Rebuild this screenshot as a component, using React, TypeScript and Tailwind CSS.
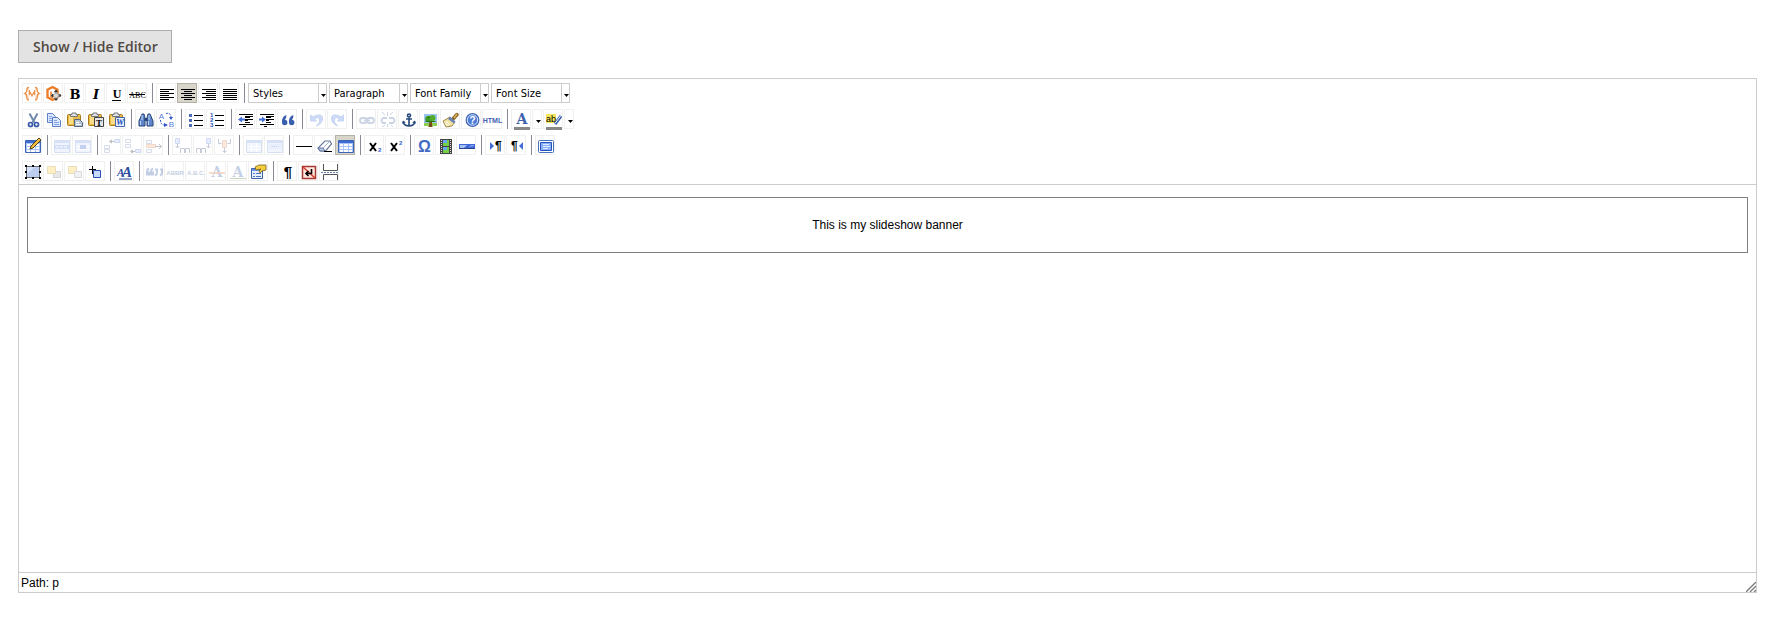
import { Fragment, type ReactNode } from 'react'

const serif = '"Liberation Serif", "Times New Roman", serif'
const slab = '"DejaVu Serif", "Liberation Serif", serif'
const sans = '"Liberation Sans", Arial, sans-serif'

const alignLines = (side: 'left' | 'center' | 'right' | 'full') => {
  const short = { left: 'h9', center: 'h8', right: 'h10', full: 'h14' }[side]
  const x = { left: 4, center: 7, right: 8, full: 4 }[side]
  return (
    <path
      d={`M4 6.5h14M${x} 8.5${short}M4 10.5h14M${x} 12.5${short}M4 14.5h14M${x} 16.5${short}`}
      stroke="#000"
      shapeRendering="crispEdges"
    />
  )
}

const clipboard = (
  <>
    <rect x="3.5" y="5.5" width="13" height="11" rx="1" fill="#e8bc48" stroke="#a87a1c" />
    <path d="M5 7h4v8H5z" fill="#f8dc88" />
    <path d="M6.500 7.500v-2h1.500v-1.500h4v1.500h1.500v2z" fill="#dfe3ea" stroke="#777" />
  </>
)

const sheet = (x: number, y: number) => (
  <g>
    <path d={`M${x}.5 ${y}.5h5l3 3v6h-8z`} fill="#dce8ff" stroke="#5b7fc8" />
    <path d={`M${x + 2} ${y + 3}.5h3M${x + 2} ${y + 5}.5h5M${x + 2} ${y + 7}.5h5`} stroke="#86a5e4" />
  </g>
)

const tableGrid = (
  <>
    <path d="M3.500 5.500h15v12h-15z" fill="#fff" stroke="#5577bb" />
    <path d="M4 6h14v3H4z" fill="#5a84d8" />
    <path d="M4 11.500h14M4 14.500h14M7.500 9v8M11.500 9v8M14.500 9v8" stroke="#7c9ddb" />
  </>
)

const dataGrid = (
  <>
    <path d="M3.500 5.500h15v12h-15z" fill="#a9c4f6" stroke="#3d64b8" />
    <path d="M4 6h14v2H4z" fill="#3f6cd0" />
    <path d="M5 9h3v2H5zM9 9h4v2H9zM14 9h3v2h-3zM5 12h3v2H5zM9 12h4v2H9zM14 12h3v2h-3zM5 15h3v2H5zM9 15h4v2H9zM14 15h3v2h-3z" fill="#fff" />
  </>
)

const panel = (
  <>
    <path d="M3.500 5.500h15v12h-15z" fill="#cfdcf8" stroke="#7a9ae0" />
    <path d="M4 6h14v2H4z" fill="#7c9fe8" />
  </>
)

const rowCells = (y: number) => (
  <path d={`M3.500 ${y}.5h5v3h-5zM8.500 ${y + 3}.5h-5`} fill="#f4f7ff" stroke="#8090b8" />
)
const blueCell = (x: number, y: number) => (
  <path d={`M${x}.5 ${y}.5h5v3h-5z`} fill="#b4caff" stroke="#6080d0" />
)

const indentLines = (
  <>
    <path d="M4 5.500h14M10 7.500h8M10 10.500h8M10 13.500h5M4 15.500h14M8 17.500h3" stroke="#000" shapeRendering="crispEdges" />
    <path d="M10 8h5v1h-5zM10 11h3v1h-3z" fill="#000" />
  </>
)

const icons: Record<string, ReactNode> = {
  variable: (
    <g fill="none" stroke="#ee9147">
      <path d="M7 4.500Q4.800 4.500 4.800 7T3 10.500Q4.800 11 4.800 14T7 17" strokeWidth="1.400" />
      <path d="M13 4.500Q15.200 4.500 15.200 7T17 10.500Q15.200 11 15.200 14T13 17" strokeWidth="1.400" />
      <path d="M7.500 7v5M12.500 7v5M8 9l2 4 2-4" strokeWidth="1.200" />
      <path d="M6.500 6.500v9M13.500 6.500v9" stroke="#f7c59c" strokeDasharray="1 1" />
    </g>
  ),
  widget: (
    <>
      <path d="M9.500 4l5 2.700v7.600l-5 2.700-5-2.700V6.700z" fill="#fff" stroke="#ef7d28" strokeWidth="2.400" />
      <path d="M8 8.500v5l2 1.500" fill="none" stroke="#ef7d28" strokeWidth="1.600" />
      <path d="M13 8v9M8.500 12.500h9" stroke="#999" strokeWidth="3" />
      <path d="M13 6.500l2 2.500h-4zM13 18l2-2.500h-4zM8 12.500l2-2v4zM18.500 12.500l-2-2v4z" fill="#333" />
      <circle cx="13" cy="12.500" r="2" fill="#ddd" />
    </>
  ),
  bold: <text x="11" y="15.500" textAnchor="middle" fontSize="13" fontWeight="700" fontFamily={slab}>B</text>,
  italic: <text x="11" y="15.500" textAnchor="middle" fontSize="13" fontWeight="700" fontStyle="italic" fontFamily={slab}>I</text>,
  underline: (
    <>
      <text x="11" y="15" textAnchor="middle" fontSize="12" fontWeight="700" fontFamily={serif}>U</text>
      <path d="M6 17.500h9" stroke="#000" shapeRendering="crispEdges" />
    </>
  ),
  strike: (
    <>
      <text x="10.500" y="14.500" textAnchor="middle" fontSize="8" fontFamily={serif}>ABC</text>
      <path d="M2 11.500h16" stroke="#000" shapeRendering="crispEdges" />
    </>
  ),
  left: alignLines('left'),
  center: alignLines('center'),
  right: alignLines('right'),
  full: alignLines('full'),
  cut: (
    <g fill="none">
      <path d="M7.500 4.500l5 9M15.500 4.500l-5 9" stroke="#7189ac" strokeWidth="2" />
      <circle cx="8.500" cy="15.500" r="2" stroke="#3457a6" strokeWidth="1.700" />
      <circle cx="14.500" cy="15.500" r="2" stroke="#3457a6" strokeWidth="1.700" />
    </g>
  ),
  copy: <>{sheet(4, 4)}{sheet(9, 8)}</>,
  paste: <>{clipboard}<path d="M10.500 10.500h5l3 3v4h-8z" fill="#b8c5d5" stroke="#526580" /><path d="M12 13.500h3M12 15.500h5" stroke="#fff" /></>,
  pastetext: (
    <>
      {clipboard}
      <path d="M9.500 8.500h9v9h-9z" fill="#e6e6e6" stroke="#444" />
      <text x="14" y="16.500" textAnchor="middle" fontSize="9" fontWeight="700" fontFamily={serif}>T</text>
    </>
  ),
  pasteword: (
    <>
      {clipboard}
      <path d="M9.500 8.500h9v9h-9z" fill="#e5efff" stroke="#4668a8" />
      <text x="14" y="16" textAnchor="middle" fontSize="9" fontWeight="700" fontStyle="italic" fill="#244fb4" fontFamily={serif}>W</text>
    </>
  ),
  find: (
    <>
      <path d="M7 5h2l1 4v8H4v-5zM13 5h2l3 7v5h-6V9z" fill="#5f86c8" stroke="#27477c" />
      <path d="M7 6v5M14 6v5M5.500 12v4M13.500 12v4" stroke="#c5d6f5" />
      <path d="M9.500 9h3v3h-3z" fill="#27477c" />
    </>
  ),
  replace: (
    <>
      <text x="5.500" y="9.500" textAnchor="middle" fontSize="8" fill="#5a7bdc" fontFamily={sans}>A</text>
      <text x="15.500" y="18" textAnchor="middle" fontSize="8" fill="#5a7bdc" fontFamily={sans}>B</text>
      <path d="M4.500 11q0 5 4 5M10 4.500q5-1 5 4" fill="none" stroke="#3155c8" strokeDasharray="2 1" />
      <path d="M8 14l4 2-4 2zM13 8h4l-2 3z" fill="#3155c8" />
    </>
  ),
  bullets: (
    <>
      <path d="M9 6.500h9M9 11.500h9M9 16.500h9" stroke="#000" shapeRendering="crispEdges" />
      <path d="M4 5h3v3H4zM4 10h3v3H4zM4 15h3v3H4z" fill="#4c6db5" />
    </>
  ),
  numbers: (
    <>
      <path d="M9 6.500h9M9 11.500h9M9 16.500h9" stroke="#000" shapeRendering="crispEdges" />
      <g fill="#244fb4" fontSize="6" fontWeight="700" fontFamily={sans}>
        <text x="4" y="8">1</text><text x="4" y="13">2</text><text x="4" y="18">3</text>
      </g>
    </>
  ),
  outdent: <>{indentLines}<path d="M3 10.500l4-3v2h3v2H7v2z" fill="#4671dc" /></>,
  indent: <>{indentLines}<path d="M10 10.500l-4-3v2H3v2h3v2z" fill="#4671dc" /></>,
  quote: (
    <g fill="#3a5fb0">
      <path d="M9.500 6C6 7 5 10 5 12.500v1h1.500L9 9zM16.500 6C13 7 12 10 12 12.500v1h1.500L16 9z" />
      <circle cx="7.700" cy="13.500" r="2.700" />
      <circle cx="14.700" cy="13.500" r="2.700" />
    </g>
  ),
  undo: <path d="M4.500 6v6h6l-2-2Q12 7 13.500 10t-3 7Q17 14 16.500 9T8.500 7L7 8z" fill="#5c8cf0" stroke="#4a72d0" />,
  redo: <path d="M16.500 6v6h-6l2-2Q9 7 7.500 10t3 7Q4 14 4.500 9T12.500 7L14 8z" fill="#5c8cf0" stroke="#4a72d0" />,
  link: (
    <g fill="none" stroke="#5472a8" strokeWidth="1.800">
      <rect x="4" y="9" width="7" height="5" rx="2.500" />
      <rect x="11" y="9" width="7" height="5" rx="2.500" />
      <path d="M8 11.500h6" />
    </g>
  ),
  unlink: (
    <g fill="none" stroke="#5472a8" strokeWidth="1.800">
      <path d="M10 9H6q-3 2.500 0 5h3M12 9h4q3 2.500 0 5h-4" />
      <path d="M5 3l3 3M10.500 3v4M16 3l-3 3M5 18l3-2M10.500 18v-3M16 18l-2-2" strokeWidth="1" />
    </g>
  ),
  anchor: (
    <g fill="none" stroke="#2c4c7e" strokeWidth="1.700">
      <circle cx="11" cy="6.500" r="1.500" />
      <path d="M11 8.500v9M8 10h6M5 12.500q1 4.500 6 4.500t6-4.500" />
      <path d="M4 14.500l1.200-3 2.600 2zM18 14.500l-1.200-3-2.600 2z" fill="#2c4c7e" stroke="none" />
    </g>
  ),
  image: (
    <>
      <path d="M5 5h13v12H5z" fill="#9bc6f4" />
      <path d="M5 14h13v3H5z" fill="#8fcf50" />
      <path d="M10.500 11h2.500v6l1 1h-5l1-1z" fill="#7a4b18" />
      <circle cx="9.500" cy="10" r="3.200" fill="#3f9a22" />
      <circle cx="13.500" cy="9" r="3" fill="#53ad2b" />
      <path d="M6.500 12h10v1h-10zM9 8h2v1H9z" fill="#277515" />
    </>
  ),
  cleanup: (
    <>
      <path d="M17 5.500l-4 4.500" stroke="#8a6528" strokeWidth="3.500" strokeLinecap="round" />
      <path d="M17 5l-3 4" stroke="#ddb85c" strokeWidth="1.300" />
      <path d="M10 8l5 5-3 4-6 1-3-6z" fill="#f2e0a0" stroke="#a08a52" />
      <path d="M10 7.500l5.500 5-1.500 2-6-4.500z" fill="#6b83b5" />
      <path d="M6 12l4 4M5 13.500l2.500 3.500" stroke="#fff" />
    </>
  ),
  help: (
    <>
      <circle cx="11.500" cy="11" r="6.200" fill="#4d7bd8" stroke="#4167b8" strokeWidth="1.500" />
      <circle cx="11.500" cy="11" r="5.200" fill="none" stroke="#dce8fc" />
      <text x="11.500" y="14.500" textAnchor="middle" fontSize="10" fontWeight="700" fill="#fff" fontFamily={sans}>?</text>
    </>
  ),
  html: <text x="10.500" y="14" textAnchor="middle" fontSize="7" fontWeight="700" fill="#3f62b5" fontFamily={sans}>HTML</text>,
  forecolor: (
    <>
      <text x="11" y="15" textAnchor="middle" fontSize="14" fontWeight="700" fill="#3f62ad" fontFamily={slab}>A</text>
      <path d="M3 18h16v3H3z" fill="#888" />
    </>
  ),
  backcolor: (
    <>
      <path d="M3 5h10v9H3z" fill="#f4e65c" />
      <text x="3" y="12.500" fontSize="9" fontFamily={sans}>ab</text>
      <path d="M18 7l-6 8" stroke="#345caa" strokeWidth="3" />
      <path d="M17.500 7l-5.500 7.500" stroke="#fff" />
      <path d="M3 18h16v3H3z" fill="#888" />
    </>
  ),
  table: (
    <>
      {dataGrid}
      <path d="M17 3l2 2-8 8-3 1 1-3z" fill="#efbd42" stroke="#5b4215" />
    </>
  ),
  rowprops: <>{panel}<path d="M3 10h16v4H3z" fill="#6f95ee" /><path d="M5 12h12" stroke="#fff" strokeDasharray="3 1" /></>,
  cellprops: <>{panel}<path d="M8 10h6v4H8z" fill="#3d67d4" /><path d="M4 11.500h4M14 11.500h4M4 14.500h14" stroke="#fff" /></>,
  rowbefore: <>{blueCell(13, 4)}{rowCells(10)}{rowCells(14)}<path d="M9 6.500h4M8.500 6.500l2-1.500v3z" stroke="#334" /></>,
  rowafter: <>{rowCells(4)}{rowCells(9)}{blueCell(13, 14)}<path d="M9 16.500h4M8.500 16.500l2-1.500v3z" stroke="#334" /></>,
  rowdelete: (
    <>
      {rowCells(5)}{rowCells(14)}
      <path d="M3.500 9.500h9v3h-9z" fill="#f9b58d" stroke="#d28258" />
      <path d="M12 11.500h6M16 9l2.500 2.500L16 14" fill="none" stroke="#334" />
    </>
  ),
  colbefore: (
    <>
      <path d="M3.500 3.500h4v5h-4z" fill="#b4caff" stroke="#6080d0" />
      <path d="M5.500 9v4M3.500 11l2 2 2-2M8.500 18v-4.500h4V18M13.500 18v-4.500h4V18" fill="none" stroke="#445580" />
    </>
  ),
  colafter: (
    <>
      <path d="M13.500 3.500h4v5h-4z" fill="#b4caff" stroke="#6080d0" />
      <path d="M15.500 9v4M13.500 11l2 2 2-2M3.500 18v-4.500h4V18M8.500 18v-4.500h4V18" fill="none" stroke="#445580" />
    </>
  ),
  coldelete: (
    <>
      <path d="M8.500 5.500h4v7h-4z" fill="#f9b58d" stroke="#d28258" />
      <path d="M4.500 4v4.500h3M16.500 4v4.500h-3M10.500 13v5M8.500 15.500l2 2 2-2" fill="none" stroke="#445580" />
    </>
  ),
  split: <>{panel}<path d="M4 11.500h14M4 14.500h14M8.500 8v9M13.500 8v9" stroke="#fff" /></>,
  merge: <>{panel}<path d="M5 9h12v5H5z" fill="#b4c9f8" /><path d="M8 11.500h6" stroke="#4468c8" strokeDasharray="1 1" /></>,
  hr: <path d="M3 11.500h16" stroke="#000" shapeRendering="crispEdges" />,
  removeformat: (
    <>
      <path d="M11 6h5l1.500 3-6 7H6l-2-3z" fill="#fff" stroke="#66779c" strokeWidth="1.200" />
      <path d="M4 13l2 3h5l-2-3z" fill="#b8c8eb" stroke="#66779c" />
      <path d="M9 13l7-7" stroke="#9badd5" />
      <path d="M10 16.500h8" stroke="#000" shapeRendering="crispEdges" />
    </>
  ),
  visualaid: dataGrid,
  sub: (
    <>
      <path d="M6 8l6 8M12 8l-6 8" stroke="#000" strokeWidth="2" />
      <text x="14" y="17" fontSize="6" fontWeight="700" fill="#315bd0" fontFamily={sans}>2</text>
    </>
  ),
  sup: (
    <>
      <path d="M6 8l6 8M12 8l-6 8" stroke="#000" strokeWidth="2" />
      <text x="14" y="10" fontSize="6" fontWeight="700" fill="#315bd0" fontFamily={sans}>2</text>
    </>
  ),
  omega: <text x="10.500" y="17" textAnchor="middle" fontSize="16" fontWeight="700" fill="#426ac4" fontFamily={sans}>Ω</text>,
  media: (
    <>
      <path d="M5 4h12v15H5z" fill="#444" />
      <path d="M8 5h6v6H8zM8 12h6v6H8z" fill="#73cf46" />
      <path d="M8 5h4v3H8zM8 12h4v3H8z" fill="#66a8ef" />
      <path d="M6.500 5v13M15.500 5v13" stroke="#ddd" strokeDasharray="1 1" />
    </>
  ),
  advhr: (
    <>
      <path d="M3 9h16v5H3z" fill="#4068d8" />
      <path d="M4 10h7l-3 3H4z" fill="#a7c0f2" />
      <path d="M13 12l2-2h3v1z" fill="#86a6ee" />
      <path d="M3 13.500h16" stroke="#28478f" />
    </>
  ),
  ltr: (
    <>
      <path d="M5 7l4 4-4 4z" fill="#426dd8" />
      <text x="10" y="15" fontSize="12" fontWeight="700" fontFamily={sans}>¶</text>
    </>
  ),
  rtl: (
    <>
      <path d="M17 7l-4 4 4 4z" fill="#426dd8" />
      <text x="5" y="15" fontSize="12" fontWeight="700" fontFamily={sans}>¶</text>
    </>
  ),
  fullscreen: (
    <>
      <rect x="3.500" y="5.500" width="15" height="12" rx="1" fill="#fff" stroke="#4670bc" />
      <path d="M5.500 7.500h11v8h-11z" fill="#89b0f8" stroke="#2853bb" />
      <path d="M8 9.500h6M8 11.500h7M8 13.500h5" stroke="#dce9ff" />
    </>
  ),
  layer: (
    <>
      <path d="M4.500 5.500h13v11h-13z" fill="#d7e3fa" stroke="#666" />
      <path d="M5 13l8-7h4v10H5z" fill="#bdcdf0" />
      <path d="M3 4h2v2H3zM10 4h2v2h-2zM17 4h2v2h-2zM3 10h2v2H3zM17 10h2v2h-2zM3 16h2v2H3zM10 16h2v2h-2zM17 16h2v2h-2z" />
    </>
  ),
  forward: <><path d="M10.500 10.500h7v6h-7z" fill="#b0b4bc" stroke="#777" /><path d="M4.500 5.500h8v7h-8z" fill="#ffcf3b" stroke="#b59028" /></>,
  backward: <><path d="M4.500 5.500h8v7h-8z" fill="#ffcf3b" stroke="#b59028" /><path d="M10.500 10.500h7v6h-7z" fill="#d0d4dc" stroke="#888" /></>,
  absolute: (
    <>
      <path d="M8.500 9.500h7v7h-7z" fill="#c8dafc" stroke="#2850bd" />
      <path d="M7.500 5v8M4 8.500h7" stroke="#000" shapeRendering="crispEdges" />
    </>
  ),
  styleprops: (
    <>
      <text x="3" y="15" fontSize="11" fontWeight="700" fontStyle="italic" fill="#2b4c9c" fontFamily={serif}>A</text>
      <text x="8" y="16" fontSize="15" fontWeight="700" fontStyle="italic" fill="#2b4c9c" fontFamily={serif}>A</text>
      <path d="M5 18h13" stroke="#2b4c9c" />
    </>
  ),
  cite: (
    <g fill="none" stroke="#3a5fb0" strokeWidth="2">
      <path d="M6 7.500q-2 1-2 3v3h2v-2H4M10 7.500q-2 1-2 3v3h2v-2H8M12 8.500h2v3q0 2-2 3M17 8.500h2v3q0 2-2 3" />
    </g>
  ),
  abbr: <text x="11" y="14" textAnchor="middle" fontSize="6" fontWeight="700" fill="#3c5c9e" fontFamily={sans}>ABBR</text>,
  acronym: <text x="11" y="14" textAnchor="middle" fontSize="6" fontWeight="700" fill="#3c5c9e" fontFamily={sans}>A.B.C.</text>,
  del: (
    <>
      <text x="11" y="16" textAnchor="middle" fontSize="14" fontWeight="700" fill="#4164ad" fontFamily={slab}>A</text>
      <path d="M3 12h16" stroke="#e26a2c" strokeWidth="1.500" />
    </>
  ),
  ins: (
    <>
      <text x="11" y="16" textAnchor="middle" fontSize="14" fontWeight="700" fill="#4164ad" fontFamily={slab}>A</text>
      <path d="M3 17.500h16" stroke="#487c26" />
    </>
  ),
  attribs: (
    <>
      <path d="M3.500 7.500h11v10h-11z" fill="#e7efff" stroke="#3c62aa" />
      <path d="M4 8h10v2H4z" fill="#6b94e5" />
      <path d="M5 12.500h2M8 12.500h5M5 15.500h2M8 15.500h5" stroke="#4f75c4" />
      <path d="M7 6l4-2h7v5l-4 1-2 2-1-2 2-2-5 1z" fill="#f5ce3e" stroke="#79601b" strokeWidth=".8" />
    </>
  ),
  visualchars: <text x="11" y="16" textAnchor="middle" fontSize="15" fontWeight="700" fontFamily={sans}>¶</text>,
  nonbreaking: (
    <>
      <path d="M4.500 5.500h13v12h-13z" fill="#ffe6df" stroke="#a53a31" strokeWidth="1.500" />
      <path d="M5 6l12 11" stroke="#d83b2d" strokeWidth="1.500" />
      <path d="M8 12.500h5.500V8M10.500 10L8 12.500l2.500 2.500" fill="none" stroke="#000" strokeWidth="1.600" />
    </>
  ),
  pagebreak: (
    <>
      <path d="M4.500 3v6.500h14V3M4.500 19v-5.500h14V19" fill="none" stroke="#555" />
      <path d="M2 11.500h18" stroke="#6480aa" strokeDasharray="2 1" />
    </>
  ),
}

type Tool = { icon: string; label: string; off?: boolean; on?: boolean; menu?: boolean }
type Group = Tool[]

const t = (icon: string, label: string): Tool => ({ icon, label })
const off = (icon: string, label: string): Tool => ({ icon, label, off: true })

const rows: Group[][] = [
  [
    [t('variable', 'Insert Variable'), t('widget', 'Insert Widget'), t('bold', 'Bold'), t('italic', 'Italic'), t('underline', 'Underline'), t('strike', 'Strikethrough')],
    [t('left', 'Align Left'), { icon: 'center', label: 'Align Center', on: true }, t('right', 'Align Right'), t('full', 'Align Full')],
  ],
  [
    [t('cut', 'Cut'), t('copy', 'Copy'), t('paste', 'Paste'), t('pastetext', 'Paste as Plain Text'), t('pasteword', 'Paste from Word')],
    [t('find', 'Find'), t('replace', 'Find/Replace')],
    [t('bullets', 'Unordered List'), t('numbers', 'Ordered List')],
    [t('outdent', 'Outdent'), t('indent', 'Indent'), t('quote', 'Blockquote')],
    [off('undo', 'Undo'), off('redo', 'Redo')],
    [off('link', 'Insert Link'), off('unlink', 'Unlink'), t('anchor', 'Anchor'), t('image', 'Insert Image'), t('cleanup', 'Cleanup'), t('help', 'Help'), t('html', 'Edit HTML Source')],
    [{ icon: 'forecolor', label: 'Text Color', menu: true }, { icon: 'backcolor', label: 'Background Color', menu: true }],
  ],
  [
    [t('table', 'Insert Table')],
    [off('rowprops', 'Row Properties'), off('cellprops', 'Cell Properties')],
    [off('rowbefore', 'Insert Row Before'), off('rowafter', 'Insert Row After'), off('rowdelete', 'Delete Row')],
    [off('colbefore', 'Insert Column Before'), off('colafter', 'Insert Column After'), off('coldelete', 'Delete Column')],
    [off('split', 'Split Cells'), off('merge', 'Merge Cells')],
    [t('hr', 'Horizontal Line'), t('removeformat', 'Remove Formatting'), { icon: 'visualaid', label: 'Toggle Guidelines', on: true }],
    [t('sub', 'Subscript'), t('sup', 'Superscript')],
    [t('omega', 'Special Character'), t('media', 'Embedded Media'), t('advhr', 'Insert Horizontal Rule')],
    [t('ltr', 'Left to Right'), t('rtl', 'Right to Left')],
    [t('fullscreen', 'Full Screen')],
  ],
  [
    [t('layer', 'Insert Layer'), off('forward', 'Move Forward'), off('backward', 'Move Backward'), t('absolute', 'Absolute Positioning')],
    [t('styleprops', 'Edit CSS Style')],
    [off('cite', 'Citation'), off('abbr', 'Abbreviation'), off('acronym', 'Acronym'), off('del', 'Deletion'), off('ins', 'Insertion'), t('attribs', 'Attributes')],
    [t('visualchars', 'Visual Characters'), t('nonbreaking', 'Non-Breaking Space'), t('pagebreak', 'Page Break')],
  ],
]

function Caret() {
  return (
    <svg viewBox="0 0 5 3" className="h-[3px] w-[5px]" aria-hidden="true">
      <path d="M0 0h5L2.500 3z" />
    </svg>
  )
}

function Separator() {
  return <span className="mr-[3px] ml-1 h-5 w-px bg-[#8a8a94]" />
}

function ToolButton({ tool }: { tool: Tool }) {
  return (
    <>
      <button
        type="button"
        aria-label={tool.label}
        aria-pressed={tool.on}
        disabled={tool.off}
        className={`mr-px size-5 shrink-0 border ${tool.on ? 'border-[#b4b2a6] bg-[#d8d6ca]' : 'border-[#f0f0ee] bg-white'}`}
      >
        <svg
          viewBox="1 1 18 18"
          className={`block size-[18px] overflow-visible ${tool.off ? 'opacity-30' : ''}`}
          aria-hidden="true"
        >
          {icons[tool.icon]}
        </svg>
      </button>
      {tool.menu && (
        <button
          type="button"
          aria-label={`${tool.label} options`}
          className="mr-px flex h-5 w-[10px] shrink-0 items-center justify-end border border-[#f0f0ee] pt-1"
        >
          <Caret />
        </button>
      )}
    </>
  )
}

function ListBox({ name }: { name: string }) {
  return (
    <div className="relative mr-0.5 flex h-5 w-[79px] border border-[#cccccc] bg-white">
      <select
        aria-label={name}
        className="w-full appearance-none bg-transparent pt-0.5 pl-1 font-['DejaVu_Sans_Condensed','DejaVu_Sans',sans-serif] text-[11px] leading-4 text-black outline-none"
      >
        <option>{name}</option>
      </select>
      <span className="pointer-events-none absolute inset-y-0 right-0 flex w-2 items-center justify-end border-l border-[#cccccc] bg-white pt-1">
        <Caret />
      </span>
    </div>
  )
}

export default function App() {
  return (
    <main className="min-h-screen bg-white px-[18px] pt-[30px] pb-[30px] text-black">
      <button
        type="button"
        className="block h-[33px] border border-[#adadad] bg-[#e3e3e3] pr-[13px] pl-[14px] font-['Open_Sans',sans-serif] text-sm leading-5 font-semibold text-[#514943]"
      >
        Show / Hide Editor
      </button>

      <section className="mt-[15px] mr-[10px] border border-[#cccccc]" aria-label="Content editor">
        <div role="toolbar" aria-label="Formatting" className="flex flex-col gap-1.5 border-b border-[#cccccc] px-[3px] pt-1 pb-[3px]">
          {rows.map((groups, r) => (
            <div key={r} className="flex">
              {groups.map((group, g) => (
                <Fragment key={g}>
                  {g > 0 && <Separator />}
                  {group.map((tool) => (
                    <ToolButton key={tool.icon} tool={tool} />
                  ))}
                </Fragment>
              ))}
              {r === 0 && (
                <>
                  <Separator />
                  {['Styles', 'Paragraph', 'Font Family', 'Font Size'].map((name) => (
                    <ListBox key={name} name={name} />
                  ))}
                </>
              )}
            </div>
          ))}
        </div>

        <div
          role="textbox"
          aria-multiline="true"
          aria-label="Content"
          contentEditable
          suppressContentEditableWarning
          className="min-h-[387px] px-2 pt-3 font-['Liberation_Sans',Arial,sans-serif] text-xs outline-none"
        >
          <p className="border border-[#808080] py-[19px] text-center">This is my slideshow banner</p>
        </div>

        <footer className="flex items-center justify-between border-t border-[#cccccc] pl-0.5 font-['Liberation_Sans',Arial,sans-serif] text-xs leading-[18px]">
          <span className="pt-px">Path: p</span>
          <svg viewBox="0 0 10 10" className="size-[10px] self-end" aria-hidden="true">
            <path d="M0 10L10 0M4 10l6-6M8 10l2-2" stroke="#777" strokeWidth="1.300" />
          </svg>
        </footer>
      </section>
    </main>
  )
}
